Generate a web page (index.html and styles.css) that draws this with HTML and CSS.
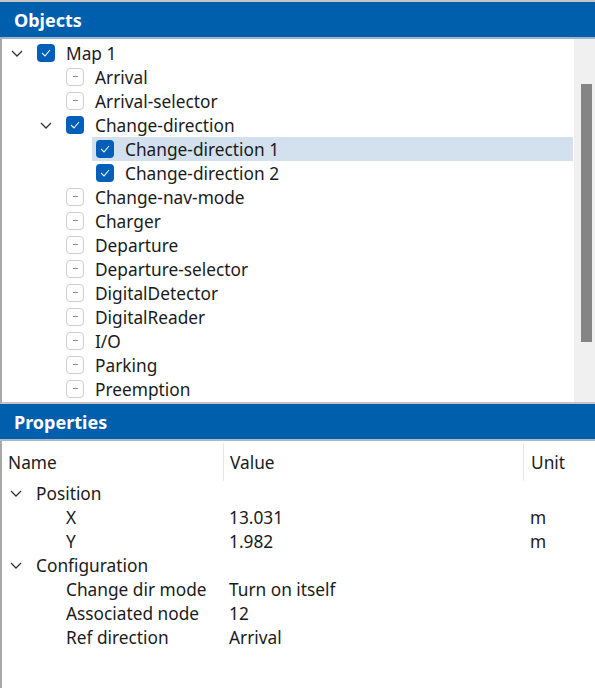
FILE: index.html
```html
<!DOCTYPE html>
<html>
<head>
<meta charset="utf-8">
<link rel="stylesheet" href="styles.css">
</head>
<body>
<div class="app">
  <section class="panel objects">
    <header class="phead">Objects</header>
    <div class="tree-wrap">
      <div class="tree">
        <div class="row l0"><span class="chev"><svg width="12" height="7" viewBox="0 0 12 7"><polyline points="1,1 6,6 11,1" fill="none" stroke="#333" stroke-width="1.3"/></svg></span><span class="cb on"><svg width="10" height="8" viewBox="0 0 10 8"><polyline points="1,4 4,7 9,1" fill="none" stroke="#fff" stroke-width="1.1"/></svg></span><span class="txt">Map 1</span></div>
        <div class="row l1"><span class="cb off"><i></i></span><span class="txt">Arrival</span></div>
        <div class="row l1"><span class="cb off"><i></i></span><span class="txt">Arrival-selector</span></div>
        <div class="row l1 hc"><span class="chev"><svg width="12" height="7" viewBox="0 0 12 7"><polyline points="1,1 6,6 11,1" fill="none" stroke="#333" stroke-width="1.3"/></svg></span><span class="cb on"><svg width="10" height="8" viewBox="0 0 10 8"><polyline points="1,4 4,7 9,1" fill="none" stroke="#fff" stroke-width="1.1"/></svg></span><span class="txt">Change-direction</span></div>
        <div class="row l2 sel"><span class="cb on"><svg width="10" height="8" viewBox="0 0 10 8"><polyline points="1,4 4,7 9,1" fill="none" stroke="#fff" stroke-width="1.1"/></svg></span><span class="txt">Change-direction 1</span></div>
        <div class="row l2"><span class="cb on"><svg width="10" height="8" viewBox="0 0 10 8"><polyline points="1,4 4,7 9,1" fill="none" stroke="#fff" stroke-width="1.1"/></svg></span><span class="txt">Change-direction 2</span></div>
        <div class="row l1"><span class="cb off"><i></i></span><span class="txt">Change-nav-mode</span></div>
        <div class="row l1"><span class="cb off"><i></i></span><span class="txt">Charger</span></div>
        <div class="row l1"><span class="cb off"><i></i></span><span class="txt">Departure</span></div>
        <div class="row l1"><span class="cb off"><i></i></span><span class="txt">Departure-selector</span></div>
        <div class="row l1"><span class="cb off"><i></i></span><span class="txt">DigitalDetector</span></div>
        <div class="row l1"><span class="cb off"><i></i></span><span class="txt">DigitalReader</span></div>
        <div class="row l1"><span class="cb off"><i></i></span><span class="txt">I/O</span></div>
        <div class="row l1"><span class="cb off"><i></i></span><span class="txt">Parking</span></div>
        <div class="row l1"><span class="cb off"><i></i></span><span class="txt">Preemption</span></div>
      </div>
      <div class="scrollbar"><div class="thumb"></div></div>
    </div>
  </section>
  <section class="panel props">
    <header class="phead">Properties</header>
    <div class="ptable">
      <div class="prow hdr"><span class="c1">Name</span><span class="c2">Value</span><span class="c3">Unit</span></div>
      <div class="prow grp"><span class="c1"><span class="chev"><svg width="12" height="7" viewBox="0 0 12 7"><polyline points="1,1 6,6 11,1" fill="none" stroke="#333" stroke-width="1.3"/></svg></span>Position</span><span class="c2"></span><span class="c3"></span></div>
      <div class="prow"><span class="c1 ind">X</span><span class="c2">13.031</span><span class="c3">m</span></div>
      <div class="prow"><span class="c1 ind">Y</span><span class="c2">1.982</span><span class="c3">m</span></div>
      <div class="prow grp"><span class="c1"><span class="chev"><svg width="12" height="7" viewBox="0 0 12 7"><polyline points="1,1 6,6 11,1" fill="none" stroke="#333" stroke-width="1.3"/></svg></span>Configuration</span><span class="c2"></span><span class="c3"></span></div>
      <div class="prow"><span class="c1 ind">Change dir mode</span><span class="c2">Turn on itself</span><span class="c3"></span></div>
      <div class="prow"><span class="c1 ind">Associated node</span><span class="c2">12</span><span class="c3"></span></div>
      <div class="prow"><span class="c1 ind">Ref direction</span><span class="c2">Arrival</span><span class="c3"></span></div>
    </div>
  </section>
</div>
</body>
</html>
```
FILE: styles.css
```css
* { box-sizing: border-box; }
html, body { margin: 0; padding: 0; background: #fff; }
body {
  font-family: "Noto Sans", "Open Sans", sans-serif;
  font-size: 17.3px;
  color: #1b1b1b;
  width: 595px;
  height: 688px;
  overflow: hidden;
}
.app { display: flex; flex-direction: column; height: 688px; }
.panel { display: flex; flex-direction: column; }
.phead {
  background: #005fad;
  color: #fff;
  font-weight: 700;
  font-size: 18px;
  padding-left: 14px;
  display: flex;
  align-items: center;
  border-bottom: 2px solid #9db4cc;
}
.objects { border-top: 2px solid #c4c4c4; }
.objects .phead { height: 37px; }
.tree-wrap {
  display: flex;
  height: 365px;
  border-left: 2px solid #a8a8a8;
  border-bottom: 2px solid #c4c4c4;
}
.tree { flex: 1; padding-top: 2px; overflow: hidden; }
.row { height: 24px; display: flex; align-items: center; white-space: nowrap; }
.row .chev { width: 12px; display: inline-flex; margin-right: 14px; }
.l0 { padding-left: 9px; }
.l1 { padding-left: 64px; }
.l1.hc { padding-left: 38px; }
.l2 { padding-left: 94px; }
.sel { background: #d2e1ed; margin-left: 90px; padding-left: 4px; margin-right: 1px; }
.cb {
  width: 18px; height: 18px; border-radius: 4px;
  display: inline-flex; align-items: center; justify-content: center;
  margin-right: 11px; flex: none;
}
.cb.on { background: #005fb8; }
.cb.off { background: #fdfdfd; border: 1px solid #cfcfcf; }
.cb.off i { display: block; width: 5px; height: 1px; background: #8a8a8a; margin-top: -2px; }
.scrollbar { width: 21px; background: #f0f0f0; padding: 45px 3px 0 7px; }
.thumb { height: 258px; background: #858585; }
.props .phead { height: 37px; border-bottom: 2px solid #a8bbcf; }
.props { flex: 1; }
.ptable { flex: 1; border-left: 2px solid #a8a8a8; }
.prow { display: flex; height: 24px; align-items: center; white-space: nowrap; }
.prow.hdr { height: 40px; align-items: center; padding-top: 2px; }
.c1 { width: 221px; padding-left: 6px; display: flex; align-items: center; }
.c2 { width: 300px; padding-left: 6px; }
.c3 { flex: 1; padding-left: 7px; }
.hdr .c1, .hdr .c2, .hdr .c3 { height: 38px; display: flex; align-items: center; }
.hdr .c2, .hdr .c3 { border-left: 1px solid #e6e6e6; }
.c1.ind { padding-left: 64px; }
.prow .chev { width: 12px; display: inline-flex; margin-left: 2px; margin-right: 14px; }
```
